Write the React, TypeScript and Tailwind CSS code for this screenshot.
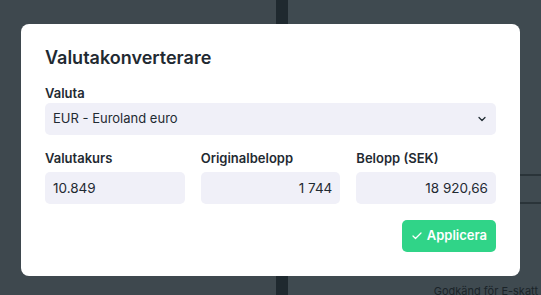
import { Check, ChevronDown } from "lucide-react";

const Field = ({ label, value, right }: { label: string; value: string; right?: boolean }) => (
  <div className="flex flex-col">
    <label className="text-[13px] leading-5 font-semibold text-[#1f2a32]">{label}</label>
    <div
      className={`mt-1 h-8 rounded-[5px] bg-[#f0f0f8] px-2 flex items-center text-[13.5px] text-[#1f2a32] ${
        right ? "justify-end" : ""
      }`}
    >
      {value}
    </div>
  </div>
);

const App = () => {
  return (
    <div className="relative w-[541px] h-[295px] overflow-hidden font-['Inter',sans-serif]">
      {/* dimmed page behind the dialog */}
      <div className="flex h-full">
        <div className="w-[276px] h-full bg-[#3e484e]" />
        <div className="w-[12px] h-full bg-[#1f292f]" />
        <div className="flex-1 min-w-0 h-full bg-[#3f4a50] flex flex-col overflow-hidden">
          <div className="h-[174px]" />
          <div className="h-[2px] bg-[#2a3439]" />
          <div className="h-[26px]" />
          <div className="h-[2px] bg-[#2a3439]" />
          <div className="flex-1 flex items-end justify-end pr-[3px]">
            <span className="text-[11px] leading-none text-[#1b2429] translate-y-[2px] whitespace-nowrap">
              Godkänd för E-skatt
            </span>
          </div>
        </div>
      </div>

      <div className="absolute left-[21px] top-[24px] w-[499px] rounded-[8px] bg-white px-6 pt-5 pb-6">
        <h2 className="text-lg leading-7 font-semibold text-[#1f2a32]">Valutakonverterare</h2>

        <div className="mt-[11px] flex flex-col">
          <label className="text-[13px] leading-5 font-semibold text-[#1f2a32]">Valuta</label>
          <div className="h-8 rounded-[5px] bg-[#f0f0f8] px-2 flex items-center justify-between text-[13px] text-[#1f2a32]">
            <span>EUR - Euroland euro</span>
            <ChevronDown size={12} strokeWidth={2.5} />
          </div>
        </div>

        <div className="mt-[13px] grid grid-cols-3 gap-4">
          <Field label="Valutakurs" value="10.849" />
          <Field label="Originalbelopp" value="1 744" right />
          <Field label="Belopp (SEK)" value="18 920,66" right />
        </div>

        <div className="mt-4 flex justify-end">
          <button className="h-8 px-[9px] rounded-[5px] bg-[#30d488] text-white text-[13px] font-semibold flex items-center gap-1">
            <Check size={12} strokeWidth={2.5} />
            Applicera
          </button>
        </div>
      </div>
    </div>
  );
};

export default App;
